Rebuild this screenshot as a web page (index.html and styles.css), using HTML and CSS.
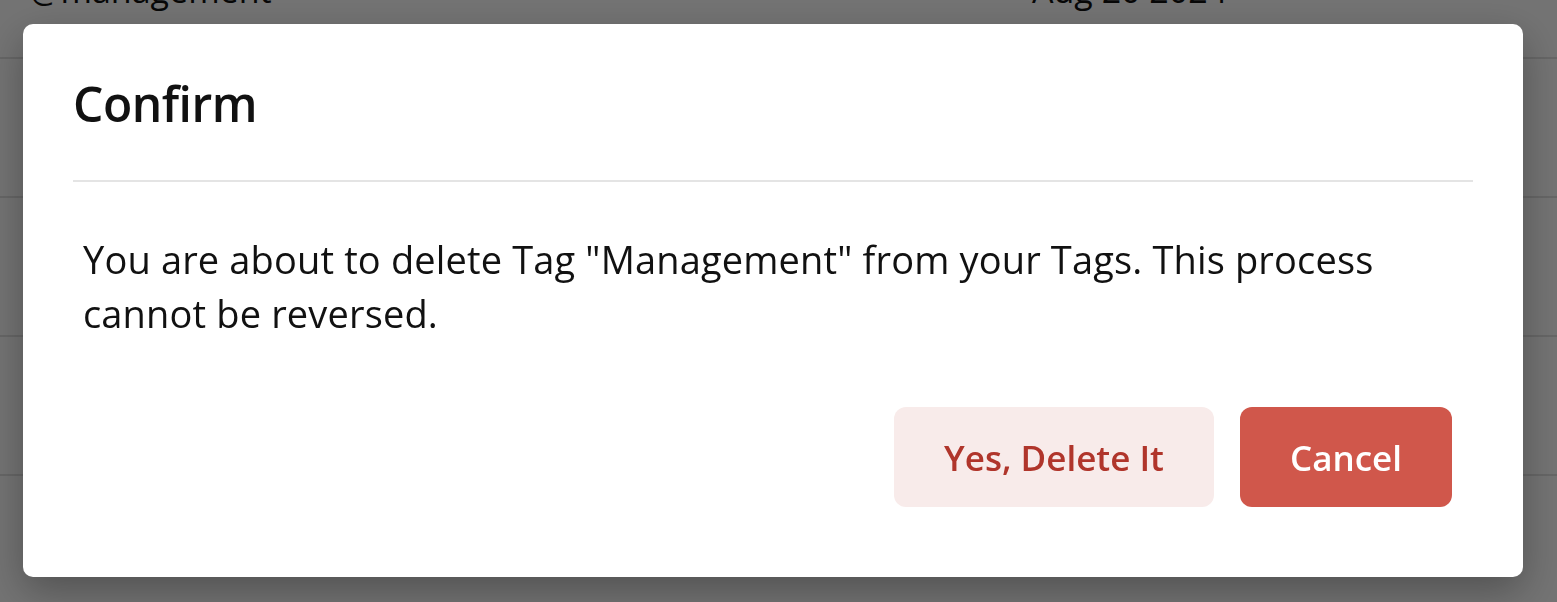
FILE: index.html
```html
<!DOCTYPE html>
<html lang="en">
<head>
    <meta charset="UTF-8">
    <meta name="viewport" content="width=device-width, initial-scale=1.0">
    <title>Tags - Confirm delete</title>
    <link rel="stylesheet" href="styles.css">
</head>
<body>
    <!-- tag list behind the dialog -->
    <div class="tag-list">
        <div class="tag-row">
            <span class="tag-name">@management</span>
            <span class="tag-date">Aug 20 2024</span>
        </div>
        <div class="tag-row">
            <span class="tag-name">@marketing</span>
            <span class="tag-date">Aug 18 2024</span>
        </div>
        <div class="tag-row">
            <span class="tag-name">@design</span>
            <span class="tag-date">Aug 12 2024</span>
        </div>
        <div class="tag-row">
            <span class="tag-name">@finance</span>
            <span class="tag-date">Aug 02 2024</span>
        </div>
        <div class="tag-row">
            <span class="tag-name">@support</span>
            <span class="tag-date">Jul 29 2024</span>
        </div>
    </div>

    <!-- confirm dialog -->
    <div class="overlay">
        <div class="modal">
            <div class="modal-header">
                <h2 class="modal-title">Confirm</h2>
            </div>
            <p class="modal-text">You are about to delete Tag "Management" from your Tags. This process cannot be reversed.</p>
            <div class="modal-actions">
                <button class="btn btn-soft">Yes, Delete It</button>
                <button class="btn btn-danger">Cancel</button>
            </div>
        </div>
    </div>
</body>
</html>
```

FILE: styles.css
```css
* {
    margin: 0;
    padding: 0;
    box-sizing: border-box;
    font-family: "Open Sans", "Noto Sans", Arial, sans-serif;
}

body {
    background-color: #fff;
    color: #111;
    overflow: hidden;
}

.tag-list {
    margin-top: -80px;
}

.tag-row {
    display: flex;
    align-items: flex-end;
    height: 139px;
    padding: 0 30px 44px;
    border-bottom: 2px solid #e2e2e2;
    font-size: 34px;
}

.tag-name {
    width: 1002px;
}

.overlay {
    position: fixed;
    inset: 0;
    display: flex;
    padding: 24px 34px 25px 23px;
    background-color: rgba(0, 0, 0, 0.55);
}

.modal {
    flex: 1;
    display: flex;
    flex-direction: column;
    background-color: #fff;
    border-radius: 10px;
    padding: 0 50px 70px;
    box-shadow: 0 14px 40px rgba(0, 0, 0, 0.3);
}

.modal-header {
    padding-top: 50px;
    padding-bottom: 46px;
    border-bottom: 2px solid #e4e4e4;
}

.modal-title {
    font-size: 48px;
    font-weight: 600;
    line-height: 60px;
    letter-spacing: -0.5px;
    color: #111;
}

.modal-text {
    margin-top: 50px;
    padding: 0 10px;
    font-size: 38px;
    line-height: 54px;
    letter-spacing: 0.15px;
    color: #111;
}

.modal-actions {
    display: flex;
    justify-content: flex-end;
    gap: 26px;
    margin-top: 67px;
    padding-right: 21px;
}

.btn {
    height: 100px;
    padding: 0 50px;
    border: none;
    border-radius: 12px;
    font-size: 35px;
    font-weight: 600;
    cursor: pointer;
}

.btn-soft {
    background-color: #f8ebea;
    color: #b0352b;
}

.btn-danger {
    background-color: #d0574b;
    color: #fff;
}
```
